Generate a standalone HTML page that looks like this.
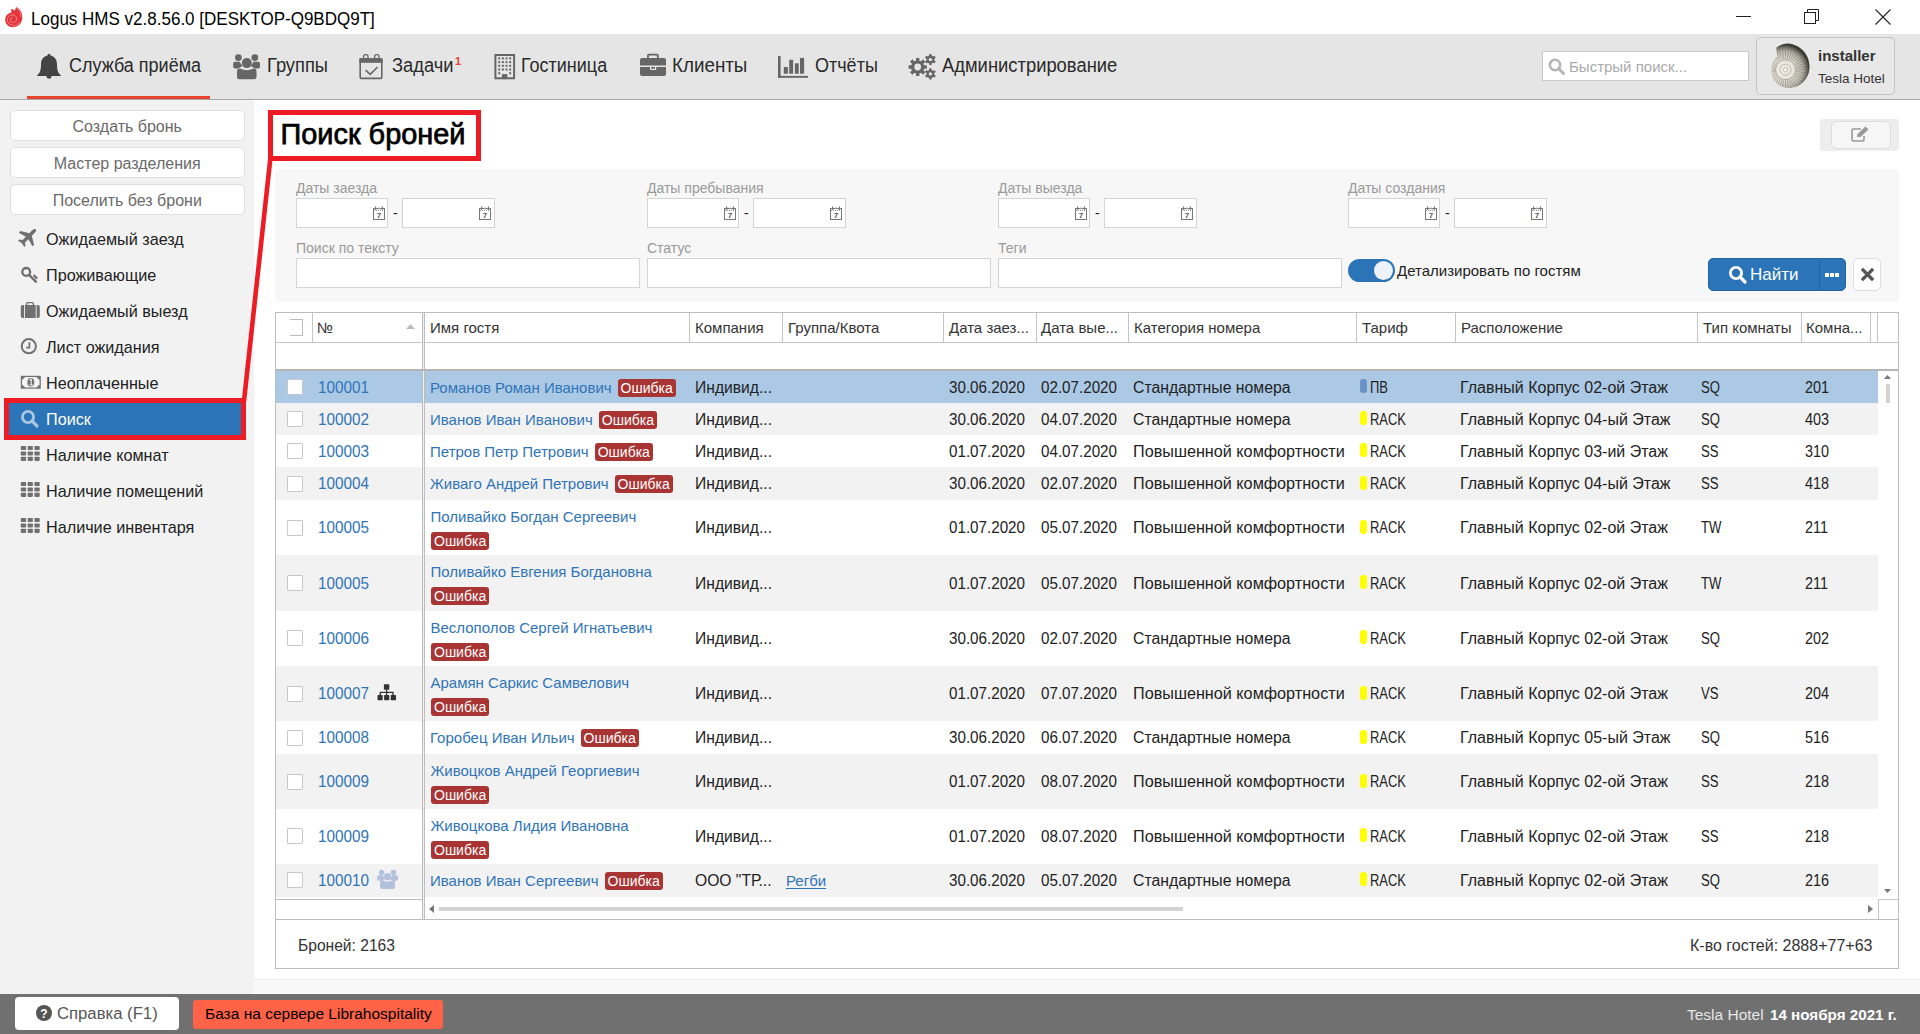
<!DOCTYPE html>
<html><head><meta charset="utf-8"><title>Logus HMS</title><style>
*{box-sizing:border-box;margin:0;padding:0}
html,body{width:1920px;height:1034px;overflow:hidden;background:#fff;font-family:"Liberation Sans",sans-serif;color:#222}
.a{position:absolute;white-space:nowrap}
.t{position:absolute;white-space:nowrap;line-height:1}
svg{position:absolute;overflow:visible}
/* title bar */
#titlebar{position:absolute;left:0;top:0;width:1920px;height:34px;background:#fff}
#menubar{position:absolute;left:0;top:34px;width:1920px;height:66px;background:#e5e5e5;border-bottom:1px solid #a8a8a8}
.mi{position:absolute;top:34px;height:62px;line-height:62px;font-size:20px;color:#2a2a2a;transform:scaleX(0.9);transform-origin:0 0}
#sidebar{position:absolute;left:0;top:100px;width:254px;height:894px;background:#f2f2f2}
.sbtn{position:absolute;left:10px;width:234.5px;height:31px;background:#fff;border:1px solid #dedede;border-radius:5px;text-align:center;line-height:31px;font-size:16px;color:#6a6a6a}
.nav{position:absolute;left:46px;height:36px;line-height:36px;font-size:16.2px;color:#222}
#main{position:absolute;left:254px;top:100px;width:1666px;height:894px;background:#fff}
#lowband{position:absolute;left:254px;top:979px;width:1666px;height:14px;background:#f8f8f8;border-top:1px solid #ededed}
#filter{position:absolute;left:275px;top:169px;width:1624px;height:133px;background:#f7f7f7;border-radius:4px}
.flab{position:absolute;font-size:14px;color:#9a9a9a;line-height:14px}
.inp{position:absolute;height:30px;background:#fff;border:1px solid #d4d4d4}
.cal{position:absolute}
#footer{position:absolute;left:0;top:994px;width:1920px;height:40px;background:#707070}
/* table */
#tbl{position:absolute;left:275px;top:312px;width:1624px;height:657px;border:1px solid #bdbdbd;background:#fff}
.vl{position:absolute;width:1px;background:#c6c6c6}
.hl{position:absolute;height:1px;background:#c6c6c6}
.th{position:absolute;top:313px;height:29px;line-height:29px;font-size:15px;color:#333}
.row{position:absolute;left:276px;width:1602px}
.cell{position:absolute;white-space:nowrap;font-size:16px;color:#222}
.lnk{color:#2f74b8}
.badge{display:inline-block;background:#a93434;color:#fff;border-radius:3px;font-size:14px;height:18px;line-height:19px;padding:0 3px;vertical-align:top;overflow:hidden}
.cb{position:absolute;left:287px;width:16px;height:16px;background:#fff;border:1px solid #c8c8c8;border-radius:1px}
.mark{position:absolute;width:7px;height:14px;border-radius:3px}
</style></head><body>
<div id="titlebar"></div>
<svg style="left:4px;top:6px" width="20" height="23" viewBox="4 6 20 23">
<path d="M11 8.8 L15 10.5 L16 7 C20 8.5 22.3 12.5 22.3 17 C22.3 23 18.2 27.3 13 27.3 C8.5 27.3 5.2 24 5.2 19.8 C5.2 16 8 13 11.6 12.6 Z" fill="#e3353b"/>
<path d="M13 25 C9.6 25 7.4 22.6 7.4 19.8 C7.4 17 9.6 14.8 12.4 14.8 C14.8 14.8 16.7 16.6 16.7 19 C16.7 21 15.2 22.6 13.2 22.6 C11.6 22.6 10.4 21.4 10.4 19.9 C10.4 18.6 11.4 17.6 12.6 17.6" fill="none" stroke="#f08a8e" stroke-width="0.9"/>
<path d="M16 7.5 C19.5 9.5 21 13 21 17 M19.5 21.5 C18.5 24 16 25.8 13 26" fill="none" stroke="#f3a0a3" stroke-width="0.7"/>
</svg>
<div class="t" style="left:31px;top:9.5px;font-size:18px;line-height:18px;color:#000;transform:scaleX(0.945);transform-origin:0 0">Logus HMS v2.8.56.0 [DESKTOP-Q9BDQ9T]</div>
<div class="a" style="left:1736px;top:16px;width:15px;height:1px;background:#222"></div>
<svg style="left:1804px;top:9px" width="16" height="16" viewBox="0 0 16 16"><rect x="0.5" y="3.5" width="11" height="11" fill="none" stroke="#222" stroke-width="1"/><path d="M3.5 3.5 V0.5 H14.5 V11.5 H11.5" fill="none" stroke="#222" stroke-width="1"/></svg>
<svg style="left:1875px;top:9px" width="16" height="16" viewBox="0 0 16 16"><path d="M0.5 0.5 L15.5 15.5 M15.5 0.5 L0.5 15.5" stroke="#222" stroke-width="1.1"/></svg>
<div id="menubar"></div>
<div class="a" style="left:27px;top:96px;width:183px;height:3px;background:#e8432e"></div>
<div class="mi" style="left:69px;transform:scaleX(0.9)">Служба приёма</div>
<div class="mi" style="left:267px;transform:scaleX(0.915)">Группы</div>
<div class="mi" style="left:392px;transform:scaleX(0.915)">Задачи</div>
<div class="mi" style="left:521px;transform:scaleX(0.9)">Гостиница</div>
<div class="mi" style="left:672px;transform:scaleX(0.94)">Клиенты</div>
<div class="mi" style="left:815px;transform:scaleX(0.9)">Отчёты</div>
<div class="mi" style="left:942px;transform:scaleX(0.919)">Администрирование</div>
<div class="t" style="left:455px;top:56px;font-size:11px;font-weight:700;color:#e8432e">1</div>
<svg style="left:36px;top:53px" width="26" height="28" viewBox="36 53 26 28"><path d="M49 53.8 C49.9 53.8 50.4 54.5 50.5 55.6 C55 56.6 57 60 57 64.5 C57 70 57.8 72.5 61 75.5 L61 76 H37 L37 75.5 C40.2 72.5 41 70 41 64.5 C41 60 43 56.6 47.5 55.6 C47.6 54.5 48.1 53.8 49 53.8 Z" fill="#444"/><path d="M46.5 76 A2.5 2.6 0 0 0 51.5 76 Z" fill="#444"/></svg>
<svg style="left:232px;top:53px" width="30" height="28" viewBox="232 53 30 28"><circle cx="238.4" cy="57.6" r="3.4" fill="#666"/><circle cx="254.8" cy="57.6" r="3.4" fill="#666"/><path d="M233.2 63.5 Q233.2 61.7 235 61.7 L239.5 61.7 Q241 64 242.5 66 Q240 67 238.5 68.5 L235 68.5 Q233.2 68.5 233.2 66.8 Z" fill="#666"/><path d="M260 63.5 Q260 61.7 258.2 61.7 L253.7 61.7 Q252.2 64 250.7 66 Q253.2 67 254.7 68.5 L258.2 68.5 Q260 68.5 260 66.8 Z" fill="#666"/><circle cx="246.8" cy="63.1" r="5" fill="#666"/><path d="M237 71.5 Q237 68.4 240 68.4 Q243.5 70.2 246.8 70.2 Q250.1 70.2 253.5 68.4 Q256.5 68.4 256.5 71.5 L256.5 76.8 Q256.5 79.3 254 79.3 L239.5 79.3 Q237 79.3 237 76.8 Z" fill="#666"/></svg>
<svg style="left:358px;top:53px" width="26" height="28" viewBox="358 53 26 28"><rect x="360.2" y="59" width="21.6" height="19.4" rx="1" fill="none" stroke="#666" stroke-width="1.6"/><rect x="359.4" y="58.3" width="23.2" height="4.5" fill="#666"/><rect x="363.6" y="54.6" width="4.4" height="6.4" rx="2" fill="none" stroke="#666" stroke-width="1.3"/><rect x="374.6" y="54.6" width="4.4" height="6.4" rx="2" fill="none" stroke="#666" stroke-width="1.3"/><path d="M365.6 70.2 L370.2 74.3 L377.6 67" fill="none" stroke="#666" stroke-width="1.6"/></svg>
<svg style="left:493px;top:53px" width="24" height="28" viewBox="493 53 24 28"><rect x="495.4" y="55" width="18.7" height="23.3" fill="none" stroke="#666" stroke-width="2"/><rect x="498.20" y="57.40" width="2" height="2" fill="#666"/><rect x="501.85" y="57.40" width="2" height="2" fill="#666"/><rect x="505.50" y="57.40" width="2" height="2" fill="#666"/><rect x="509.15" y="57.40" width="2" height="2" fill="#666"/><rect x="498.20" y="61.10" width="2" height="2" fill="#666"/><rect x="501.85" y="61.10" width="2" height="2" fill="#666"/><rect x="505.50" y="61.10" width="2" height="2" fill="#666"/><rect x="509.15" y="61.10" width="2" height="2" fill="#666"/><rect x="498.20" y="64.80" width="2" height="2" fill="#666"/><rect x="501.85" y="64.80" width="2" height="2" fill="#666"/><rect x="505.50" y="64.80" width="2" height="2" fill="#666"/><rect x="509.15" y="64.80" width="2" height="2" fill="#666"/><rect x="498.20" y="68.50" width="2" height="2" fill="#666"/><rect x="501.85" y="68.50" width="2" height="2" fill="#666"/><rect x="505.50" y="68.50" width="2" height="2" fill="#666"/><rect x="509.15" y="68.50" width="2" height="2" fill="#666"/><rect x="498.2" y="72.2" width="2" height="2" fill="#666"/><rect x="509.1" y="72.2" width="2" height="2" fill="#666"/><rect x="501.9" y="74.1" width="5.4" height="5" fill="#666"/></svg>
<svg style="left:638px;top:52px" width="30" height="26" viewBox="638 52 30 26"><path d="M647.1 58.5 V55.3 Q647.1 53.8 648.6 53.8 H657.2 Q658.7 53.8 658.7 55.3 V58.5 H656.9 V55.6 H648.9 V58.5 Z" fill="#666"/><path d="M640 60 Q640 58 642 58 H664 Q666 58 666 60 V65.6 H640 Z" fill="#666"/><path d="M640 67 H650 V70 H656.2 V67 H666 V74 Q666 76 664 76 H642 Q640 76 640 74 Z" fill="#666"/><rect x="651.3" y="67" width="3.6" height="1.8" fill="#666"/></svg>
<svg style="left:776px;top:53px" width="34" height="27" viewBox="776 53 34 27"><rect x="778" y="55.9" width="2.6" height="21.9" fill="#666"/><rect x="778" y="75.9" width="30" height="1.9" fill="#666"/><rect x="783.8" y="67" width="4.1" height="6.7" fill="#666"/><rect x="789.2" y="59.8" width="3.9" height="13.9" fill="#666"/><rect x="794.9" y="63.3" width="3.8" height="10.4" fill="#666"/><rect x="800" y="57.9" width="4.1" height="15.8" fill="#666"/></svg>
<svg style="left:905px;top:52px" width="36" height="30" viewBox="905 52 36 30"><rect x="916.20" y="58.00" width="3.0" height="18.00" fill="#666" transform="rotate(0.0 917.7 67)"/><rect x="916.20" y="58.00" width="3.0" height="18.00" fill="#666" transform="rotate(45.0 917.7 67)"/><rect x="916.20" y="58.00" width="3.0" height="18.00" fill="#666" transform="rotate(90.0 917.7 67)"/><rect x="916.20" y="58.00" width="3.0" height="18.00" fill="#666" transform="rotate(135.0 917.7 67)"/><rect x="916.20" y="58.00" width="3.0" height="18.00" fill="#666" transform="rotate(180.0 917.7 67)"/><rect x="916.20" y="58.00" width="3.0" height="18.00" fill="#666" transform="rotate(225.0 917.7 67)"/><rect x="916.20" y="58.00" width="3.0" height="18.00" fill="#666" transform="rotate(270.0 917.7 67)"/><rect x="916.20" y="58.00" width="3.0" height="18.00" fill="#666" transform="rotate(315.0 917.7 67)"/><circle cx="917.7" cy="67" r="6.6" fill="#666"/><circle cx="917.7" cy="67" r="3.4" fill="#e5e5e5"/><rect x="929.40" y="54.20" width="2.0" height="10.80" fill="#666" transform="rotate(0.0 930.4 59.6)"/><rect x="929.40" y="54.20" width="2.0" height="10.80" fill="#666" transform="rotate(60.0 930.4 59.6)"/><rect x="929.40" y="54.20" width="2.0" height="10.80" fill="#666" transform="rotate(120.0 930.4 59.6)"/><rect x="929.40" y="54.20" width="2.0" height="10.80" fill="#666" transform="rotate(180.0 930.4 59.6)"/><rect x="929.40" y="54.20" width="2.0" height="10.80" fill="#666" transform="rotate(240.0 930.4 59.6)"/><rect x="929.40" y="54.20" width="2.0" height="10.80" fill="#666" transform="rotate(300.0 930.4 59.6)"/><circle cx="930.4" cy="59.6" r="4.0" fill="#666"/><circle cx="930.4" cy="59.6" r="1.7" fill="#e5e5e5"/><rect x="929.40" y="68.50" width="2.0" height="10.80" fill="#666" transform="rotate(0.0 930.4 73.9)"/><rect x="929.40" y="68.50" width="2.0" height="10.80" fill="#666" transform="rotate(60.0 930.4 73.9)"/><rect x="929.40" y="68.50" width="2.0" height="10.80" fill="#666" transform="rotate(120.0 930.4 73.9)"/><rect x="929.40" y="68.50" width="2.0" height="10.80" fill="#666" transform="rotate(180.0 930.4 73.9)"/><rect x="929.40" y="68.50" width="2.0" height="10.80" fill="#666" transform="rotate(240.0 930.4 73.9)"/><rect x="929.40" y="68.50" width="2.0" height="10.80" fill="#666" transform="rotate(300.0 930.4 73.9)"/><circle cx="930.4" cy="73.9" r="4.0" fill="#666"/><circle cx="930.4" cy="73.9" r="1.7" fill="#e5e5e5"/></svg>
<div class="a" style="left:1542px;top:51px;width:207px;height:30px;background:#fff;border:1px solid #c9c9c9"></div>
<svg style="left:1548px;top:58px" width="17" height="17" viewBox="0 0 17 17"><circle cx="7" cy="7" r="5.2" fill="none" stroke="#b5b5b5" stroke-width="2.6"/><path d="M10.5 10.5 L15.5 15.5" stroke="#b5b5b5" stroke-width="3" stroke-linecap="round"/></svg>
<div class="t" style="left:1569px;top:58px;font-size:15px;line-height:17px;color:#aaa">Быстрый поиск...</div>
<div class="a" style="left:1756px;top:37px;width:139px;height:58px;background:#e8e8e8;border:1px solid #c4c4c4;border-radius:5px"></div>
<svg style="left:1768px;top:40px" width="46" height="50" viewBox="1768 40 46 50">
<defs><radialGradient id="sh" cx="1784" cy="70" r="25" gradientUnits="userSpaceOnUse"><stop offset="0" stop-color="#f2efe8"/><stop offset="0.45" stop-color="#e6e2d8"/><stop offset="0.75" stop-color="#b8b4a9"/><stop offset="0.92" stop-color="#6e6a62"/><stop offset="1" stop-color="#3a3833"/></radialGradient>
<clipPath id="shc"><path d="M1788 43.5 C1800 44.5 1809.5 54 1809.5 66.5 C1809.5 79 1800 88 1789 88 C1778.5 88 1771.5 80 1771.5 70.5 C1771.5 63.5 1774.5 58.5 1777.5 56.5 C1776.5 53 1776.3 50 1776.5 47.5 C1780 45 1784 43.5 1788 43.5 Z"/></clipPath></defs>
<path d="M1788 43.5 C1800 44.5 1809.5 54 1809.5 66.5 C1809.5 79 1800 88 1789 88 C1778.5 88 1771.5 80 1771.5 70.5 C1771.5 63.5 1774.5 58.5 1777.5 56.5 C1776.5 53 1776.3 50 1776.5 47.5 C1780 45 1784 43.5 1788 43.5 Z" fill="url(#sh)"/>
<g clip-path="url(#shc)"><path d="M1796.0 69.7 L1815.5 69.7 M1795.9 71.3 L1815.1 74.4 M1795.5 72.9 L1814.0 79.0 M1794.9 74.5 L1812.2 83.3 M1794.0 75.9 L1809.8 87.3 M1792.9 77.1 L1806.7 90.9 M1791.7 78.2 L1803.1 94.0 M1790.3 79.1 L1799.1 96.4 M1788.7 79.7 L1794.8 98.2 M1787.1 80.1 L1790.2 99.3 M1785.5 80.2 L1785.5 99.7 M1783.9 80.1 L1780.8 99.3 M1782.3 79.7 L1776.2 98.2 M1780.7 79.1 L1771.9 96.4 M1779.3 78.2 L1767.9 94.0 M1778.1 77.1 L1764.3 90.9 M1777.0 75.9 L1761.2 87.3 M1776.1 74.5 L1758.8 83.3 M1775.5 72.9 L1757.0 79.0 M1775.1 71.3 L1755.9 74.4 M1775.0 69.7 L1755.5 69.7 M1775.1 68.1 L1755.9 65.0 M1775.5 66.5 L1757.0 60.4 M1776.1 64.9 L1758.8 56.1 M1777.0 63.5 L1761.2 52.1 M1778.1 62.3 L1764.3 48.5 M1779.3 61.2 L1767.9 45.4 M1780.7 60.3 L1771.9 43.0 M1782.3 59.7 L1776.2 41.2 M1783.9 59.3 L1780.8 40.1 M1785.5 59.2 L1785.5 39.7 M1787.1 59.3 L1790.2 40.1 M1788.7 59.7 L1794.8 41.2 M1790.3 60.3 L1799.1 43.0 M1791.7 61.2 L1803.1 45.4 M1792.9 62.3 L1806.7 48.5 M1794.0 63.5 L1809.8 52.1 M1794.9 64.9 L1812.2 56.1 M1795.5 66.5 L1814.0 60.4 M1795.9 68.1 L1815.1 65.0 " stroke="#6a665e" stroke-width="1" opacity="0.45"/></g>
<circle cx="1785.5" cy="69.7" r="10" fill="none" stroke="#a9a59a" stroke-width="1"/>
<circle cx="1785.5" cy="69.7" r="5.5" fill="none" stroke="#b4b0a5" stroke-width="0.9"/>
<circle cx="1785.5" cy="69.7" r="2.3" fill="none" stroke="#b4b0a5" stroke-width="0.7"/>
</svg>
<div class="t" style="left:1818px;top:47px;font-size:15px;line-height:17px;font-weight:700;color:#333">installer</div>
<div class="t" style="left:1818px;top:71px;font-size:13.5px;line-height:16px;color:#333">Tesla Hotel</div>
<div id="sidebar"></div>
<div class="sbtn" style="top:109.5px">Создать бронь</div>
<div class="sbtn" style="top:146.5px">Мастер разделения</div>
<div class="sbtn" style="top:183.5px">Поселить без брони</div>
<div class="nav" style="top:221px">Ожидаемый заезд</div>
<svg style="left:18px;top:226px" width="22" height="22" viewBox="18 226 22 22"><path d="M0,-10 C1.2,-10 1.7,-8.5 1.7,-7 L1.7,-3 L9.2,1.4 L9.2,3.6 L1.7,1.6 L1.7,6 L4.2,8 L4.2,9.6 L0,8.6 L-4.2,9.6 L-4.2,8 L-1.7,6 L-1.7,1.6 L-9.2,3.6 L-9.2,1.4 L-1.7,-3 L-1.7,-7 C-1.7,-8.5 -1.2,-10 0,-10 Z" fill="#707070" transform="translate(28.3 236.8) rotate(45) scale(1.05)"/></svg>
<div class="nav" style="top:257px">Проживающие</div>
<svg style="left:18px;top:263px" width="22" height="22" viewBox="18 263 22 22"><circle cx="26.2" cy="271.9" r="3.9" fill="none" stroke="#707070" stroke-width="2.3"/><path d="M28.8 274.6 L36.6 282.4" stroke="#707070" stroke-width="2.5"/><path d="M33.6 275 L37.2 278.6" stroke="#707070" stroke-width="2.2"/></svg>
<div class="nav" style="top:293px">Ожидаемый выезд</div>
<svg style="left:18px;top:300px" width="24" height="20" viewBox="18 300 24 20"><rect x="26.6" y="302.6" width="6.8" height="3.6" rx="1" fill="none" stroke="#707070" stroke-width="1.3"/><rect x="20.8" y="305" width="19" height="13" rx="2" fill="#707070"/><rect x="24" y="305" width="0.9" height="13" fill="#f2f2f2"/><rect x="35.7" y="305" width="0.9" height="13" fill="#f2f2f2"/></svg>
<div class="nav" style="top:329px">Лист ожидания</div>
<svg style="left:18px;top:336px" width="22" height="22" viewBox="18 336 22 22"><circle cx="28.8" cy="346.2" r="7.1" fill="none" stroke="#707070" stroke-width="2"/><path d="M29.4 342.3 V347.6 H26.2" fill="none" stroke="#707070" stroke-width="1.7"/></svg>
<div class="nav" style="top:365px">Неоплаченные</div>
<svg style="left:18px;top:373px" width="26" height="18" viewBox="18 373 26 18"><rect x="20.8" y="375.8" width="20" height="12.9" fill="#707070"/><path d="M25.2 377 H36.4 L39.6 380 V384.6 L36.4 387.6 H25.2 L22 384.6 V380 Z" fill="#f2f2f2"/><ellipse cx="30.8" cy="382.2" rx="3.4" ry="4.3" fill="#707070"/><path d="M29.6 380.2 L31.2 379.2 V384.6 M29.4 385 H33" fill="none" stroke="#f2f2f2" stroke-width="1.1"/></svg>
<div class="a" style="left:9px;top:403px;width:232px;height:32px;background:#2b74b8"></div>
<div class="nav" style="top:401px;color:#fff">Поиск</div>
<svg style="left:20px;top:409px" width="19" height="19" viewBox="0 0 19 19"><circle cx="8" cy="8" r="5.6" fill="none" stroke="#a9c6e3" stroke-width="2.8"/><path d="M12 12 L17 17" stroke="#a9c6e3" stroke-width="3.2" stroke-linecap="round"/></svg>
<div class="nav" style="top:437px">Наличие комнат</div>
<svg style="left:19px;top:444px" width="24" height="19" viewBox="19 444 24 19"><rect x="20.8" y="446.0" width="5.3" height="4.1" rx="0.8" fill="#707070"/><rect x="27.6" y="446.0" width="5.3" height="4.1" rx="0.8" fill="#707070"/><rect x="34.4" y="446.0" width="5.3" height="4.1" rx="0.8" fill="#707070"/><rect x="20.8" y="451.4" width="5.3" height="4.1" rx="0.8" fill="#707070"/><rect x="27.6" y="451.4" width="5.3" height="4.1" rx="0.8" fill="#707070"/><rect x="34.4" y="451.4" width="5.3" height="4.1" rx="0.8" fill="#707070"/><rect x="20.8" y="456.8" width="5.3" height="4.1" rx="0.8" fill="#707070"/><rect x="27.6" y="456.8" width="5.3" height="4.1" rx="0.8" fill="#707070"/><rect x="34.4" y="456.8" width="5.3" height="4.1" rx="0.8" fill="#707070"/></svg>
<div class="nav" style="top:473px">Наличие помещений</div>
<svg style="left:19px;top:480px" width="24" height="19" viewBox="19 480 24 19"><rect x="20.8" y="482.0" width="5.3" height="4.1" rx="0.8" fill="#707070"/><rect x="27.6" y="482.0" width="5.3" height="4.1" rx="0.8" fill="#707070"/><rect x="34.4" y="482.0" width="5.3" height="4.1" rx="0.8" fill="#707070"/><rect x="20.8" y="487.4" width="5.3" height="4.1" rx="0.8" fill="#707070"/><rect x="27.6" y="487.4" width="5.3" height="4.1" rx="0.8" fill="#707070"/><rect x="34.4" y="487.4" width="5.3" height="4.1" rx="0.8" fill="#707070"/><rect x="20.8" y="492.8" width="5.3" height="4.1" rx="0.8" fill="#707070"/><rect x="27.6" y="492.8" width="5.3" height="4.1" rx="0.8" fill="#707070"/><rect x="34.4" y="492.8" width="5.3" height="4.1" rx="0.8" fill="#707070"/></svg>
<div class="nav" style="top:509px">Наличие инвентаря</div>
<svg style="left:19px;top:516px" width="24" height="19" viewBox="19 516 24 19"><rect x="20.8" y="518.0" width="5.3" height="4.1" rx="0.8" fill="#707070"/><rect x="27.6" y="518.0" width="5.3" height="4.1" rx="0.8" fill="#707070"/><rect x="34.4" y="518.0" width="5.3" height="4.1" rx="0.8" fill="#707070"/><rect x="20.8" y="523.4" width="5.3" height="4.1" rx="0.8" fill="#707070"/><rect x="27.6" y="523.4" width="5.3" height="4.1" rx="0.8" fill="#707070"/><rect x="34.4" y="523.4" width="5.3" height="4.1" rx="0.8" fill="#707070"/><rect x="20.8" y="528.8" width="5.3" height="4.1" rx="0.8" fill="#707070"/><rect x="27.6" y="528.8" width="5.3" height="4.1" rx="0.8" fill="#707070"/><rect x="34.4" y="528.8" width="5.3" height="4.1" rx="0.8" fill="#707070"/></svg>
<div id="main"></div>
<div id="lowband"></div>
<div class="t" style="left:280.5px;top:119px;font-size:28.9px;line-height:30px;color:#000;-webkit-text-stroke:0.75px #000">Поиск броней</div>
<div class="a" style="left:1820px;top:119px;width:79px;height:32px;background:#ededed;border-radius:3px"></div>
<div class="a" style="left:1831px;top:121px;width:60px;height:28px;background:#f6f6f6;border:1px solid #dcdcdc;border-radius:5px"></div>
<svg style="left:1851px;top:126px" width="19" height="16" viewBox="0 0 19 16"><path d="M10 3 H2.5 C1.7 3 1 3.7 1 4.5 V13.5 C1 14.3 1.7 15 2.5 15 H11.5 C12.3 15 13 14.3 13 13.5 V10" fill="none" stroke="#999" stroke-width="1.6"/><path d="M6 11 L6.5 8 L14.5 0.5 L17.5 3.5 L9.5 11 Z" fill="#999"/></svg>
<div id="filter"></div>
<div class="flab" style="left:296px;top:180.5px">Даты заезда</div>
<div class="inp" style="left:296px;top:198px;width:92px"></div>
<svg style="left:373px;top:206px" width="12" height="14" viewBox="0 0 12 14"><rect x="0.5" y="2.5" width="11" height="11" fill="none" stroke="#777" stroke-width="1"/><path d="M1 4.5 H11" stroke="#999" stroke-width="1" stroke-dasharray="1 1"/><rect x="2" y="0.5" width="1.2" height="3.5" fill="#777"/><rect x="8.8" y="0.5" width="1.2" height="3.5" fill="#777"/><rect x="5.2" y="1.5" width="1.6" height="2" fill="#aaa"/><text x="6" y="12.4" font-size="8" font-family="Liberation Sans" font-weight="700" text-anchor="middle" fill="#555">7</text></svg>
<div class="t" style="left:393px;top:206px;font-size:14px;color:#222">-</div>
<div class="inp" style="left:402px;top:198px;width:93px"></div>
<svg style="left:479px;top:206px" width="12" height="14" viewBox="0 0 12 14"><rect x="0.5" y="2.5" width="11" height="11" fill="none" stroke="#777" stroke-width="1"/><path d="M1 4.5 H11" stroke="#999" stroke-width="1" stroke-dasharray="1 1"/><rect x="2" y="0.5" width="1.2" height="3.5" fill="#777"/><rect x="8.8" y="0.5" width="1.2" height="3.5" fill="#777"/><rect x="5.2" y="1.5" width="1.6" height="2" fill="#aaa"/><text x="6" y="12.4" font-size="8" font-family="Liberation Sans" font-weight="700" text-anchor="middle" fill="#555">7</text></svg>
<div class="flab" style="left:647px;top:180.5px">Даты пребывания</div>
<div class="inp" style="left:647px;top:198px;width:92px"></div>
<svg style="left:724px;top:206px" width="12" height="14" viewBox="0 0 12 14"><rect x="0.5" y="2.5" width="11" height="11" fill="none" stroke="#777" stroke-width="1"/><path d="M1 4.5 H11" stroke="#999" stroke-width="1" stroke-dasharray="1 1"/><rect x="2" y="0.5" width="1.2" height="3.5" fill="#777"/><rect x="8.8" y="0.5" width="1.2" height="3.5" fill="#777"/><rect x="5.2" y="1.5" width="1.6" height="2" fill="#aaa"/><text x="6" y="12.4" font-size="8" font-family="Liberation Sans" font-weight="700" text-anchor="middle" fill="#555">7</text></svg>
<div class="t" style="left:744px;top:206px;font-size:14px;color:#222">-</div>
<div class="inp" style="left:753px;top:198px;width:93px"></div>
<svg style="left:830px;top:206px" width="12" height="14" viewBox="0 0 12 14"><rect x="0.5" y="2.5" width="11" height="11" fill="none" stroke="#777" stroke-width="1"/><path d="M1 4.5 H11" stroke="#999" stroke-width="1" stroke-dasharray="1 1"/><rect x="2" y="0.5" width="1.2" height="3.5" fill="#777"/><rect x="8.8" y="0.5" width="1.2" height="3.5" fill="#777"/><rect x="5.2" y="1.5" width="1.6" height="2" fill="#aaa"/><text x="6" y="12.4" font-size="8" font-family="Liberation Sans" font-weight="700" text-anchor="middle" fill="#555">7</text></svg>
<div class="flab" style="left:998px;top:180.5px">Даты выезда</div>
<div class="inp" style="left:998px;top:198px;width:92px"></div>
<svg style="left:1075px;top:206px" width="12" height="14" viewBox="0 0 12 14"><rect x="0.5" y="2.5" width="11" height="11" fill="none" stroke="#777" stroke-width="1"/><path d="M1 4.5 H11" stroke="#999" stroke-width="1" stroke-dasharray="1 1"/><rect x="2" y="0.5" width="1.2" height="3.5" fill="#777"/><rect x="8.8" y="0.5" width="1.2" height="3.5" fill="#777"/><rect x="5.2" y="1.5" width="1.6" height="2" fill="#aaa"/><text x="6" y="12.4" font-size="8" font-family="Liberation Sans" font-weight="700" text-anchor="middle" fill="#555">7</text></svg>
<div class="t" style="left:1095px;top:206px;font-size:14px;color:#222">-</div>
<div class="inp" style="left:1104px;top:198px;width:93px"></div>
<svg style="left:1181px;top:206px" width="12" height="14" viewBox="0 0 12 14"><rect x="0.5" y="2.5" width="11" height="11" fill="none" stroke="#777" stroke-width="1"/><path d="M1 4.5 H11" stroke="#999" stroke-width="1" stroke-dasharray="1 1"/><rect x="2" y="0.5" width="1.2" height="3.5" fill="#777"/><rect x="8.8" y="0.5" width="1.2" height="3.5" fill="#777"/><rect x="5.2" y="1.5" width="1.6" height="2" fill="#aaa"/><text x="6" y="12.4" font-size="8" font-family="Liberation Sans" font-weight="700" text-anchor="middle" fill="#555">7</text></svg>
<div class="flab" style="left:1348px;top:180.5px">Даты создания</div>
<div class="inp" style="left:1348px;top:198px;width:92px"></div>
<svg style="left:1425px;top:206px" width="12" height="14" viewBox="0 0 12 14"><rect x="0.5" y="2.5" width="11" height="11" fill="none" stroke="#777" stroke-width="1"/><path d="M1 4.5 H11" stroke="#999" stroke-width="1" stroke-dasharray="1 1"/><rect x="2" y="0.5" width="1.2" height="3.5" fill="#777"/><rect x="8.8" y="0.5" width="1.2" height="3.5" fill="#777"/><rect x="5.2" y="1.5" width="1.6" height="2" fill="#aaa"/><text x="6" y="12.4" font-size="8" font-family="Liberation Sans" font-weight="700" text-anchor="middle" fill="#555">7</text></svg>
<div class="t" style="left:1445px;top:206px;font-size:14px;color:#222">-</div>
<div class="inp" style="left:1454px;top:198px;width:93px"></div>
<svg style="left:1531px;top:206px" width="12" height="14" viewBox="0 0 12 14"><rect x="0.5" y="2.5" width="11" height="11" fill="none" stroke="#777" stroke-width="1"/><path d="M1 4.5 H11" stroke="#999" stroke-width="1" stroke-dasharray="1 1"/><rect x="2" y="0.5" width="1.2" height="3.5" fill="#777"/><rect x="8.8" y="0.5" width="1.2" height="3.5" fill="#777"/><rect x="5.2" y="1.5" width="1.6" height="2" fill="#aaa"/><text x="6" y="12.4" font-size="8" font-family="Liberation Sans" font-weight="700" text-anchor="middle" fill="#555">7</text></svg>
<div class="flab" style="left:296px;top:240.5px">Поиск по тексту</div>
<div class="inp" style="left:296px;top:258px;width:344px"></div>
<div class="flab" style="left:647px;top:240.5px">Статус</div>
<div class="inp" style="left:647px;top:258px;width:344px"></div>
<div class="flab" style="left:998px;top:240.5px">Теги</div>
<div class="inp" style="left:998px;top:258px;width:344px"></div>
<div class="a" style="left:1348px;top:259px;width:47px;height:23px;background:#2b74b8;border-radius:12px"></div>
<div class="a" style="left:1374px;top:261px;width:19px;height:19px;background:#eef3f9;border-radius:50%"></div>
<div class="t" style="left:1397px;top:263px;font-size:15px;line-height:16px;color:#222">Детализировать по гостям</div>
<div class="a" style="left:1708px;top:258px;width:112px;height:33px;background:#2b74b8;border:1px solid #23649f;border-radius:5px 0 0 5px"></div>
<svg style="left:1728px;top:265px" width="19" height="19" viewBox="0 0 19 19"><circle cx="8" cy="8" r="5.6" fill="none" stroke="#fff" stroke-width="2.8"/><path d="M12 12 L17 17" stroke="#fff" stroke-width="3.2" stroke-linecap="round"/></svg>
<div class="t" style="left:1750px;top:266px;font-size:17px;line-height:18px;color:#fff">Найти</div>
<div class="a" style="left:1819px;top:258px;width:27px;height:33px;background:#2b74b8;border:1px solid #23649f;border-radius:0 5px 5px 0"></div>
<div class="a" style="left:1825px;top:273px;width:14px;height:4px;background:repeating-linear-gradient(90deg,#fff 0 4px,transparent 4px 5px)"></div>
<div class="a" style="left:1853px;top:258px;width:28px;height:33px;background:#fff;border:1px solid #dcdcdc;border-radius:5px"></div>
<svg style="left:1861px;top:268px" width="13" height="13" viewBox="0 0 13 13"><path d="M2 2 L11 11 M11 2 L2 11" stroke="#555" stroke-width="3.2" stroke-linecap="square"/></svg>
<div id="tbl"></div>
<div class="hl" style="left:276px;top:342px;width:1622px"></div>
<div class="vl" style="left:312px;top:313px;height:29px"></div>
<div class="vl" style="left:689px;top:313px;height:29px"></div>
<div class="vl" style="left:782px;top:313px;height:29px"></div>
<div class="vl" style="left:943px;top:313px;height:29px"></div>
<div class="vl" style="left:1036px;top:313px;height:29px"></div>
<div class="vl" style="left:1128px;top:313px;height:29px"></div>
<div class="vl" style="left:1356px;top:313px;height:29px"></div>
<div class="vl" style="left:1455px;top:313px;height:29px"></div>
<div class="vl" style="left:1697px;top:313px;height:29px"></div>
<div class="vl" style="left:1801px;top:313px;height:29px"></div>
<div class="vl" style="left:1870px;top:313px;height:29px"></div>
<div class="vl" style="left:1877px;top:313px;height:29px"></div>
<div class="a" style="left:422px;top:313px;width:3px;height:606px;border-left:1px solid #bdbdbd;border-right:1px solid #bdbdbd;background:#f0f0f0"></div>
<div class="a" style="left:276px;top:369px;width:1622px;height:2px;background:#b4b4b4"></div>
<div class="th" style="left:317px">№</div>
<div class="th" style="left:430px">Имя гостя</div>
<div class="th" style="left:695px">Компания</div>
<div class="th" style="left:788px">Группа/Квота</div>
<div class="th" style="left:949px">Дата заез...</div>
<div class="th" style="left:1041px">Дата вые...</div>
<div class="th" style="left:1134px">Категория номера</div>
<div class="th" style="left:1362px">Тариф</div>
<div class="th" style="left:1461px">Расположение</div>
<div class="th" style="left:1703px">Тип комнаты</div>
<div class="th" style="left:1806px">Комна...</div>
<div class="a" style="left:290px;top:319px;width:13px;height:17px;border:1px solid #bbb;border-left:none"></div>
<svg style="left:406px;top:324px" width="9" height="5" viewBox="0 0 9 5"><path d="M0 5 L4.5 0 L9 5 Z" fill="#bbb"/></svg>
<div class="a" style="left:276px;top:371px;width:146px;height:32px;background:#abc9e5"></div>
<div class="a" style="left:425px;top:371px;width:1453px;height:32px;background:#abc9e5"></div>
<div class="cb" style="top:379px"></div>
<div class="cell" style="left:318px;top:371.5px;height:32px;line-height:32px;font-size:16px;color:#2f74b8;transform:scaleX(0.9550);transform-origin:0 0;">100001</div>
<div class="cell" style="left:430px;top:371.5px;height:32px;line-height:32px;font-size:15px;color:#2f74b8">Романов Роман Иванович</div>
<div class="a" style="left:617.6px;top:378.5px"><span class="badge">Ошибка</span></div>
<div class="cell" style="left:695px;top:371.5px;height:32px;line-height:32px;font-size:16px;color:#222;transform:scaleX(0.9780);transform-origin:0 0;">Индивид...</div>
<div class="cell" style="left:949px;top:371.5px;height:32px;line-height:32px;font-size:16px;color:#222;transform:scaleX(0.9490);transform-origin:0 0;">30.06.2020</div>
<div class="cell" style="left:1041px;top:371.5px;height:32px;line-height:32px;font-size:16px;color:#222;transform:scaleX(0.9490);transform-origin:0 0;">02.07.2020</div>
<div class="cell" style="left:1133px;top:371.5px;height:32px;line-height:32px;font-size:16px;color:#222;transform:scaleX(0.9865);transform-origin:0 0;">Стандартные номера</div>
<div class="mark" style="left:1360px;top:379px;background:#6b93c6"></div>
<div class="cell" style="left:1370px;top:371.5px;height:32px;line-height:32px;font-size:16px;color:#222;transform:scaleX(0.8100);transform-origin:0 0;">ПВ</div>
<div class="cell" style="left:1460px;top:371.5px;height:32px;line-height:32px;font-size:16px;color:#222;">Главный Корпус 02-ой Этаж</div>
<div class="cell" style="left:1701px;top:371.5px;height:32px;line-height:32px;font-size:16px;color:#222;transform:scaleX(0.8200);transform-origin:0 0;">SQ</div>
<div class="cell" style="left:1805px;top:371.5px;height:32px;line-height:32px;font-size:16px;color:#222;transform:scaleX(0.9000);transform-origin:0 0;">201</div>
<div class="a" style="left:276px;top:403px;width:146px;height:32px;background:#f2f2f2"></div>
<div class="a" style="left:425px;top:403px;width:1453px;height:32px;background:#f2f2f2"></div>
<div class="cb" style="top:411px"></div>
<div class="cell" style="left:318px;top:403.5px;height:32px;line-height:32px;font-size:16px;color:#2f74b8;transform:scaleX(0.9550);transform-origin:0 0;">100002</div>
<div class="cell" style="left:430px;top:403.5px;height:32px;line-height:32px;font-size:15px;color:#2f74b8">Иванов Иван Иванович</div>
<div class="a" style="left:598.8px;top:410.5px"><span class="badge">Ошибка</span></div>
<div class="cell" style="left:695px;top:403.5px;height:32px;line-height:32px;font-size:16px;color:#222;transform:scaleX(0.9780);transform-origin:0 0;">Индивид...</div>
<div class="cell" style="left:949px;top:403.5px;height:32px;line-height:32px;font-size:16px;color:#222;transform:scaleX(0.9490);transform-origin:0 0;">30.06.2020</div>
<div class="cell" style="left:1041px;top:403.5px;height:32px;line-height:32px;font-size:16px;color:#222;transform:scaleX(0.9490);transform-origin:0 0;">04.07.2020</div>
<div class="cell" style="left:1133px;top:403.5px;height:32px;line-height:32px;font-size:16px;color:#222;transform:scaleX(0.9865);transform-origin:0 0;">Стандартные номера</div>
<div class="mark" style="left:1360px;top:411px;background:#ffff00"></div>
<div class="cell" style="left:1370px;top:403.5px;height:32px;line-height:32px;font-size:16px;color:#222;transform:scaleX(0.8100);transform-origin:0 0;">RACK</div>
<div class="cell" style="left:1460px;top:403.5px;height:32px;line-height:32px;font-size:16px;color:#222;">Главный Корпус 04-ый Этаж</div>
<div class="cell" style="left:1701px;top:403.5px;height:32px;line-height:32px;font-size:16px;color:#222;transform:scaleX(0.8200);transform-origin:0 0;">SQ</div>
<div class="cell" style="left:1805px;top:403.5px;height:32px;line-height:32px;font-size:16px;color:#222;transform:scaleX(0.9000);transform-origin:0 0;">403</div>
<div class="a" style="left:276px;top:435px;width:146px;height:32px;background:#ffffff"></div>
<div class="a" style="left:425px;top:435px;width:1453px;height:32px;background:#ffffff"></div>
<div class="cb" style="top:443px"></div>
<div class="cell" style="left:318px;top:435.5px;height:32px;line-height:32px;font-size:16px;color:#2f74b8;transform:scaleX(0.9550);transform-origin:0 0;">100003</div>
<div class="cell" style="left:430px;top:435.5px;height:32px;line-height:32px;font-size:15px;color:#2f74b8">Петров Петр Петрович</div>
<div class="a" style="left:594.7px;top:442.5px"><span class="badge">Ошибка</span></div>
<div class="cell" style="left:695px;top:435.5px;height:32px;line-height:32px;font-size:16px;color:#222;transform:scaleX(0.9780);transform-origin:0 0;">Индивид...</div>
<div class="cell" style="left:949px;top:435.5px;height:32px;line-height:32px;font-size:16px;color:#222;transform:scaleX(0.9490);transform-origin:0 0;">01.07.2020</div>
<div class="cell" style="left:1041px;top:435.5px;height:32px;line-height:32px;font-size:16px;color:#222;transform:scaleX(0.9490);transform-origin:0 0;">04.07.2020</div>
<div class="cell" style="left:1133px;top:435.5px;height:32px;line-height:32px;font-size:16px;color:#222;transform:scaleX(1.0124);transform-origin:0 0;">Повышенной комфортности</div>
<div class="mark" style="left:1360px;top:443px;background:#ffff00"></div>
<div class="cell" style="left:1370px;top:435.5px;height:32px;line-height:32px;font-size:16px;color:#222;transform:scaleX(0.8100);transform-origin:0 0;">RACK</div>
<div class="cell" style="left:1460px;top:435.5px;height:32px;line-height:32px;font-size:16px;color:#222;">Главный Корпус 03-ий Этаж</div>
<div class="cell" style="left:1701px;top:435.5px;height:32px;line-height:32px;font-size:16px;color:#222;transform:scaleX(0.8200);transform-origin:0 0;">SS</div>
<div class="cell" style="left:1805px;top:435.5px;height:32px;line-height:32px;font-size:16px;color:#222;transform:scaleX(0.9000);transform-origin:0 0;">310</div>
<div class="a" style="left:276px;top:467px;width:146px;height:33px;background:#f2f2f2"></div>
<div class="a" style="left:425px;top:467px;width:1453px;height:33px;background:#f2f2f2"></div>
<div class="cb" style="top:476px"></div>
<div class="cell" style="left:318px;top:468.0px;height:32px;line-height:32px;font-size:16px;color:#2f74b8;transform:scaleX(0.9550);transform-origin:0 0;">100004</div>
<div class="cell" style="left:430px;top:468.0px;height:32px;line-height:32px;font-size:15px;color:#2f74b8">Живаго Андрей Петрович</div>
<div class="a" style="left:614.6px;top:475.0px"><span class="badge">Ошибка</span></div>
<div class="cell" style="left:695px;top:468.0px;height:32px;line-height:32px;font-size:16px;color:#222;transform:scaleX(0.9780);transform-origin:0 0;">Индивид...</div>
<div class="cell" style="left:949px;top:468.0px;height:32px;line-height:32px;font-size:16px;color:#222;transform:scaleX(0.9490);transform-origin:0 0;">30.06.2020</div>
<div class="cell" style="left:1041px;top:468.0px;height:32px;line-height:32px;font-size:16px;color:#222;transform:scaleX(0.9490);transform-origin:0 0;">02.07.2020</div>
<div class="cell" style="left:1133px;top:468.0px;height:32px;line-height:32px;font-size:16px;color:#222;transform:scaleX(1.0124);transform-origin:0 0;">Повышенной комфортности</div>
<div class="mark" style="left:1360px;top:476px;background:#ffff00"></div>
<div class="cell" style="left:1370px;top:468.0px;height:32px;line-height:32px;font-size:16px;color:#222;transform:scaleX(0.8100);transform-origin:0 0;">RACK</div>
<div class="cell" style="left:1460px;top:468.0px;height:32px;line-height:32px;font-size:16px;color:#222;">Главный Корпус 04-ый Этаж</div>
<div class="cell" style="left:1701px;top:468.0px;height:32px;line-height:32px;font-size:16px;color:#222;transform:scaleX(0.8200);transform-origin:0 0;">SS</div>
<div class="cell" style="left:1805px;top:468.0px;height:32px;line-height:32px;font-size:16px;color:#222;transform:scaleX(0.9000);transform-origin:0 0;">418</div>
<div class="a" style="left:276px;top:500px;width:146px;height:55px;background:#ffffff"></div>
<div class="a" style="left:425px;top:500px;width:1453px;height:55px;background:#ffffff"></div>
<div class="cb" style="top:520px"></div>
<div class="cell" style="left:318px;top:512.0px;height:32px;line-height:32px;font-size:16px;color:#2f74b8;transform:scaleX(0.9550);transform-origin:0 0;">100005</div>
<div class="cell" style="left:430.5px;top:503.8px;height:26px;line-height:26px;font-size:15px;color:#2f74b8">Поливайко Богдан Сергеевич</div>
<div class="a" style="left:431px;top:532px"><span class="badge">Ошибка</span></div>
<div class="cell" style="left:695px;top:512.0px;height:32px;line-height:32px;font-size:16px;color:#222;transform:scaleX(0.9780);transform-origin:0 0;">Индивид...</div>
<div class="cell" style="left:949px;top:512.0px;height:32px;line-height:32px;font-size:16px;color:#222;transform:scaleX(0.9490);transform-origin:0 0;">01.07.2020</div>
<div class="cell" style="left:1041px;top:512.0px;height:32px;line-height:32px;font-size:16px;color:#222;transform:scaleX(0.9490);transform-origin:0 0;">05.07.2020</div>
<div class="cell" style="left:1133px;top:512.0px;height:32px;line-height:32px;font-size:16px;color:#222;transform:scaleX(1.0124);transform-origin:0 0;">Повышенной комфортности</div>
<div class="mark" style="left:1360px;top:520px;background:#ffff00"></div>
<div class="cell" style="left:1370px;top:512.0px;height:32px;line-height:32px;font-size:16px;color:#222;transform:scaleX(0.8100);transform-origin:0 0;">RACK</div>
<div class="cell" style="left:1460px;top:512.0px;height:32px;line-height:32px;font-size:16px;color:#222;">Главный Корпус 02-ой Этаж</div>
<div class="cell" style="left:1701px;top:512.0px;height:32px;line-height:32px;font-size:16px;color:#222;transform:scaleX(0.8200);transform-origin:0 0;">TW</div>
<div class="cell" style="left:1805px;top:512.0px;height:32px;line-height:32px;font-size:16px;color:#222;transform:scaleX(0.9000);transform-origin:0 0;">211</div>
<div class="a" style="left:276px;top:555px;width:146px;height:56px;background:#f2f2f2"></div>
<div class="a" style="left:425px;top:555px;width:1453px;height:56px;background:#f2f2f2"></div>
<div class="cb" style="top:575px"></div>
<div class="cell" style="left:318px;top:567.5px;height:32px;line-height:32px;font-size:16px;color:#2f74b8;transform:scaleX(0.9550);transform-origin:0 0;">100005</div>
<div class="cell" style="left:430.5px;top:558.8px;height:26px;line-height:26px;font-size:15px;color:#2f74b8">Поливайко Евгения Богдановна</div>
<div class="a" style="left:431px;top:587px"><span class="badge">Ошибка</span></div>
<div class="cell" style="left:695px;top:567.5px;height:32px;line-height:32px;font-size:16px;color:#222;transform:scaleX(0.9780);transform-origin:0 0;">Индивид...</div>
<div class="cell" style="left:949px;top:567.5px;height:32px;line-height:32px;font-size:16px;color:#222;transform:scaleX(0.9490);transform-origin:0 0;">01.07.2020</div>
<div class="cell" style="left:1041px;top:567.5px;height:32px;line-height:32px;font-size:16px;color:#222;transform:scaleX(0.9490);transform-origin:0 0;">05.07.2020</div>
<div class="cell" style="left:1133px;top:567.5px;height:32px;line-height:32px;font-size:16px;color:#222;transform:scaleX(1.0124);transform-origin:0 0;">Повышенной комфортности</div>
<div class="mark" style="left:1360px;top:575px;background:#ffff00"></div>
<div class="cell" style="left:1370px;top:567.5px;height:32px;line-height:32px;font-size:16px;color:#222;transform:scaleX(0.8100);transform-origin:0 0;">RACK</div>
<div class="cell" style="left:1460px;top:567.5px;height:32px;line-height:32px;font-size:16px;color:#222;">Главный Корпус 02-ой Этаж</div>
<div class="cell" style="left:1701px;top:567.5px;height:32px;line-height:32px;font-size:16px;color:#222;transform:scaleX(0.8200);transform-origin:0 0;">TW</div>
<div class="cell" style="left:1805px;top:567.5px;height:32px;line-height:32px;font-size:16px;color:#222;transform:scaleX(0.9000);transform-origin:0 0;">211</div>
<div class="a" style="left:276px;top:611px;width:146px;height:55px;background:#ffffff"></div>
<div class="a" style="left:425px;top:611px;width:1453px;height:55px;background:#ffffff"></div>
<div class="cb" style="top:630px"></div>
<div class="cell" style="left:318px;top:623.0px;height:32px;line-height:32px;font-size:16px;color:#2f74b8;transform:scaleX(0.9550);transform-origin:0 0;">100006</div>
<div class="cell" style="left:430.5px;top:614.8px;height:26px;line-height:26px;font-size:15px;color:#2f74b8">Веслополов Сергей Игнатьевич</div>
<div class="a" style="left:431px;top:643px"><span class="badge">Ошибка</span></div>
<div class="cell" style="left:695px;top:623.0px;height:32px;line-height:32px;font-size:16px;color:#222;transform:scaleX(0.9780);transform-origin:0 0;">Индивид...</div>
<div class="cell" style="left:949px;top:623.0px;height:32px;line-height:32px;font-size:16px;color:#222;transform:scaleX(0.9490);transform-origin:0 0;">30.06.2020</div>
<div class="cell" style="left:1041px;top:623.0px;height:32px;line-height:32px;font-size:16px;color:#222;transform:scaleX(0.9490);transform-origin:0 0;">02.07.2020</div>
<div class="cell" style="left:1133px;top:623.0px;height:32px;line-height:32px;font-size:16px;color:#222;transform:scaleX(0.9865);transform-origin:0 0;">Стандартные номера</div>
<div class="mark" style="left:1360px;top:630px;background:#ffff00"></div>
<div class="cell" style="left:1370px;top:623.0px;height:32px;line-height:32px;font-size:16px;color:#222;transform:scaleX(0.8100);transform-origin:0 0;">RACK</div>
<div class="cell" style="left:1460px;top:623.0px;height:32px;line-height:32px;font-size:16px;color:#222;">Главный Корпус 02-ой Этаж</div>
<div class="cell" style="left:1701px;top:623.0px;height:32px;line-height:32px;font-size:16px;color:#222;transform:scaleX(0.8200);transform-origin:0 0;">SQ</div>
<div class="cell" style="left:1805px;top:623.0px;height:32px;line-height:32px;font-size:16px;color:#222;transform:scaleX(0.9000);transform-origin:0 0;">202</div>
<div class="a" style="left:276px;top:666px;width:146px;height:55px;background:#f2f2f2"></div>
<div class="a" style="left:425px;top:666px;width:1453px;height:55px;background:#f2f2f2"></div>
<div class="cb" style="top:686px"></div>
<div class="cell" style="left:318px;top:678.0px;height:32px;line-height:32px;font-size:16px;color:#2f74b8;transform:scaleX(0.9550);transform-origin:0 0;">100007</div>
<svg style="left:374px;top:681px" width="26" height="24" viewBox="374 681 26 24"><rect x="383.9" y="684.2" width="5.4" height="5.5" rx="0.6" fill="#333"/><path d="M386.6 689.7 V695.1 M380.3 695.3 V692.4 H393 V695.3" fill="none" stroke="#333" stroke-width="1.3"/><rect x="377.5" y="695.1" width="5.2" height="5.1" rx="0.6" fill="#333"/><rect x="384.1" y="695.1" width="5.2" height="5.1" rx="0.6" fill="#333"/><rect x="390.7" y="695.1" width="5.3" height="5.1" rx="0.6" fill="#333"/></svg>
<div class="cell" style="left:430.5px;top:669.8px;height:26px;line-height:26px;font-size:15px;color:#2f74b8">Арамян Саркис Самвелович</div>
<div class="a" style="left:431px;top:698px"><span class="badge">Ошибка</span></div>
<div class="cell" style="left:695px;top:678.0px;height:32px;line-height:32px;font-size:16px;color:#222;transform:scaleX(0.9780);transform-origin:0 0;">Индивид...</div>
<div class="cell" style="left:949px;top:678.0px;height:32px;line-height:32px;font-size:16px;color:#222;transform:scaleX(0.9490);transform-origin:0 0;">01.07.2020</div>
<div class="cell" style="left:1041px;top:678.0px;height:32px;line-height:32px;font-size:16px;color:#222;transform:scaleX(0.9490);transform-origin:0 0;">07.07.2020</div>
<div class="cell" style="left:1133px;top:678.0px;height:32px;line-height:32px;font-size:16px;color:#222;transform:scaleX(1.0124);transform-origin:0 0;">Повышенной комфортности</div>
<div class="mark" style="left:1360px;top:686px;background:#ffff00"></div>
<div class="cell" style="left:1370px;top:678.0px;height:32px;line-height:32px;font-size:16px;color:#222;transform:scaleX(0.8100);transform-origin:0 0;">RACK</div>
<div class="cell" style="left:1460px;top:678.0px;height:32px;line-height:32px;font-size:16px;color:#222;">Главный Корпус 02-ой Этаж</div>
<div class="cell" style="left:1701px;top:678.0px;height:32px;line-height:32px;font-size:16px;color:#222;transform:scaleX(0.8200);transform-origin:0 0;">VS</div>
<div class="cell" style="left:1805px;top:678.0px;height:32px;line-height:32px;font-size:16px;color:#222;transform:scaleX(0.9000);transform-origin:0 0;">204</div>
<div class="a" style="left:276px;top:721px;width:146px;height:33px;background:#ffffff"></div>
<div class="a" style="left:425px;top:721px;width:1453px;height:33px;background:#ffffff"></div>
<div class="cb" style="top:730px"></div>
<div class="cell" style="left:318px;top:722.0px;height:32px;line-height:32px;font-size:16px;color:#2f74b8;transform:scaleX(0.9550);transform-origin:0 0;">100008</div>
<div class="cell" style="left:430px;top:722.0px;height:32px;line-height:32px;font-size:15px;color:#2f74b8">Горобец Иван Ильич</div>
<div class="a" style="left:580.6px;top:729.0px"><span class="badge">Ошибка</span></div>
<div class="cell" style="left:695px;top:722.0px;height:32px;line-height:32px;font-size:16px;color:#222;transform:scaleX(0.9780);transform-origin:0 0;">Индивид...</div>
<div class="cell" style="left:949px;top:722.0px;height:32px;line-height:32px;font-size:16px;color:#222;transform:scaleX(0.9490);transform-origin:0 0;">30.06.2020</div>
<div class="cell" style="left:1041px;top:722.0px;height:32px;line-height:32px;font-size:16px;color:#222;transform:scaleX(0.9490);transform-origin:0 0;">06.07.2020</div>
<div class="cell" style="left:1133px;top:722.0px;height:32px;line-height:32px;font-size:16px;color:#222;transform:scaleX(0.9865);transform-origin:0 0;">Стандартные номера</div>
<div class="mark" style="left:1360px;top:730px;background:#ffff00"></div>
<div class="cell" style="left:1370px;top:722.0px;height:32px;line-height:32px;font-size:16px;color:#222;transform:scaleX(0.8100);transform-origin:0 0;">RACK</div>
<div class="cell" style="left:1460px;top:722.0px;height:32px;line-height:32px;font-size:16px;color:#222;">Главный Корпус 05-ый Этаж</div>
<div class="cell" style="left:1701px;top:722.0px;height:32px;line-height:32px;font-size:16px;color:#222;transform:scaleX(0.8200);transform-origin:0 0;">SQ</div>
<div class="cell" style="left:1805px;top:722.0px;height:32px;line-height:32px;font-size:16px;color:#222;transform:scaleX(0.9000);transform-origin:0 0;">516</div>
<div class="a" style="left:276px;top:754px;width:146px;height:55px;background:#f2f2f2"></div>
<div class="a" style="left:425px;top:754px;width:1453px;height:55px;background:#f2f2f2"></div>
<div class="cb" style="top:774px"></div>
<div class="cell" style="left:318px;top:766.0px;height:32px;line-height:32px;font-size:16px;color:#2f74b8;transform:scaleX(0.9550);transform-origin:0 0;">100009</div>
<div class="cell" style="left:430.5px;top:757.8px;height:26px;line-height:26px;font-size:15px;color:#2f74b8">Живоцков Андрей Георгиевич</div>
<div class="a" style="left:431px;top:786px"><span class="badge">Ошибка</span></div>
<div class="cell" style="left:695px;top:766.0px;height:32px;line-height:32px;font-size:16px;color:#222;transform:scaleX(0.9780);transform-origin:0 0;">Индивид...</div>
<div class="cell" style="left:949px;top:766.0px;height:32px;line-height:32px;font-size:16px;color:#222;transform:scaleX(0.9490);transform-origin:0 0;">01.07.2020</div>
<div class="cell" style="left:1041px;top:766.0px;height:32px;line-height:32px;font-size:16px;color:#222;transform:scaleX(0.9490);transform-origin:0 0;">08.07.2020</div>
<div class="cell" style="left:1133px;top:766.0px;height:32px;line-height:32px;font-size:16px;color:#222;transform:scaleX(1.0124);transform-origin:0 0;">Повышенной комфортности</div>
<div class="mark" style="left:1360px;top:774px;background:#ffff00"></div>
<div class="cell" style="left:1370px;top:766.0px;height:32px;line-height:32px;font-size:16px;color:#222;transform:scaleX(0.8100);transform-origin:0 0;">RACK</div>
<div class="cell" style="left:1460px;top:766.0px;height:32px;line-height:32px;font-size:16px;color:#222;">Главный Корпус 02-ой Этаж</div>
<div class="cell" style="left:1701px;top:766.0px;height:32px;line-height:32px;font-size:16px;color:#222;transform:scaleX(0.8200);transform-origin:0 0;">SS</div>
<div class="cell" style="left:1805px;top:766.0px;height:32px;line-height:32px;font-size:16px;color:#222;transform:scaleX(0.9000);transform-origin:0 0;">218</div>
<div class="a" style="left:276px;top:809px;width:146px;height:55px;background:#ffffff"></div>
<div class="a" style="left:425px;top:809px;width:1453px;height:55px;background:#ffffff"></div>
<div class="cb" style="top:828px"></div>
<div class="cell" style="left:318px;top:821.0px;height:32px;line-height:32px;font-size:16px;color:#2f74b8;transform:scaleX(0.9550);transform-origin:0 0;">100009</div>
<div class="cell" style="left:430.5px;top:812.8px;height:26px;line-height:26px;font-size:15px;color:#2f74b8">Живоцкова Лидия Ивановна</div>
<div class="a" style="left:431px;top:841px"><span class="badge">Ошибка</span></div>
<div class="cell" style="left:695px;top:821.0px;height:32px;line-height:32px;font-size:16px;color:#222;transform:scaleX(0.9780);transform-origin:0 0;">Индивид...</div>
<div class="cell" style="left:949px;top:821.0px;height:32px;line-height:32px;font-size:16px;color:#222;transform:scaleX(0.9490);transform-origin:0 0;">01.07.2020</div>
<div class="cell" style="left:1041px;top:821.0px;height:32px;line-height:32px;font-size:16px;color:#222;transform:scaleX(0.9490);transform-origin:0 0;">08.07.2020</div>
<div class="cell" style="left:1133px;top:821.0px;height:32px;line-height:32px;font-size:16px;color:#222;transform:scaleX(1.0124);transform-origin:0 0;">Повышенной комфортности</div>
<div class="mark" style="left:1360px;top:828px;background:#ffff00"></div>
<div class="cell" style="left:1370px;top:821.0px;height:32px;line-height:32px;font-size:16px;color:#222;transform:scaleX(0.8100);transform-origin:0 0;">RACK</div>
<div class="cell" style="left:1460px;top:821.0px;height:32px;line-height:32px;font-size:16px;color:#222;">Главный Корпус 02-ой Этаж</div>
<div class="cell" style="left:1701px;top:821.0px;height:32px;line-height:32px;font-size:16px;color:#222;transform:scaleX(0.8200);transform-origin:0 0;">SS</div>
<div class="cell" style="left:1805px;top:821.0px;height:32px;line-height:32px;font-size:16px;color:#222;transform:scaleX(0.9000);transform-origin:0 0;">218</div>
<div class="a" style="left:276px;top:864px;width:146px;height:33px;background:#f2f2f2"></div>
<div class="a" style="left:425px;top:864px;width:1453px;height:33px;background:#f2f2f2"></div>
<div class="cb" style="top:872px"></div>
<div class="cell" style="left:318px;top:865.0px;height:32px;line-height:32px;font-size:16px;color:#2f74b8;transform:scaleX(0.9550);transform-origin:0 0;">100010</div>
<svg style="left:375px;top:867px" width="26" height="24" viewBox="375 867 26 24"><circle cx="381.6" cy="872.4" r="2.7" fill="#b3c1db"/><circle cx="393.5" cy="872.4" r="2.7" fill="#b3c1db"/><path d="M377.1 876.7 Q377.1 875.2 378.6 875.2 H383 Q384 878.5 385 879.5 Q382 880.0 381.5 880.8 H378.6 Q377.1 880.8 377.1 879.3 Z" fill="#b3c1db"/><path d="M398 876.7 Q398 875.2 396.5 875.2 H392.1 Q391.1 878.5 390.1 879.5 Q393.1 880.0 393.6 880.8 H396.5 Q398 880.8 398 879.3 Z" fill="#b3c1db"/><circle cx="387.6" cy="876.6" r="3.7" fill="#b3c1db"/><path d="M380 882.5 Q380 880.1 382.5 880.1 Q385 881.7 387.5 881.7 Q390 881.7 392.5 880.1 Q395 880.1 395 882.5 V886.9 Q395 888.9 393 888.9 H382 Q380 888.9 380 886.9 Z" fill="#b3c1db"/></svg>
<div class="cell" style="left:430px;top:865.0px;height:32px;line-height:32px;font-size:15px;color:#2f74b8">Иванов Иван Сергеевич</div>
<div class="a" style="left:604.6px;top:872.0px"><span class="badge">Ошибка</span></div>
<div class="cell" style="left:695px;top:865.0px;height:32px;line-height:32px;font-size:16px;color:#222;transform:scaleX(0.9780);transform-origin:0 0;">ООО "ТР...</div>
<div class="cell" style="left:786px;top:865.0px;height:32px;line-height:32px;font-size:15px;color:#2f74b8;text-decoration:underline;text-underline-offset:2px">Регби</div>
<div class="cell" style="left:949px;top:865.0px;height:32px;line-height:32px;font-size:16px;color:#222;transform:scaleX(0.9490);transform-origin:0 0;">30.06.2020</div>
<div class="cell" style="left:1041px;top:865.0px;height:32px;line-height:32px;font-size:16px;color:#222;transform:scaleX(0.9490);transform-origin:0 0;">05.07.2020</div>
<div class="cell" style="left:1133px;top:865.0px;height:32px;line-height:32px;font-size:16px;color:#222;transform:scaleX(0.9865);transform-origin:0 0;">Стандартные номера</div>
<div class="mark" style="left:1360px;top:872px;background:#ffff00"></div>
<div class="cell" style="left:1370px;top:865.0px;height:32px;line-height:32px;font-size:16px;color:#222;transform:scaleX(0.8100);transform-origin:0 0;">RACK</div>
<div class="cell" style="left:1460px;top:865.0px;height:32px;line-height:32px;font-size:16px;color:#222;">Главный Корпус 02-ой Этаж</div>
<div class="cell" style="left:1701px;top:865.0px;height:32px;line-height:32px;font-size:16px;color:#222;transform:scaleX(0.8200);transform-origin:0 0;">SQ</div>
<div class="cell" style="left:1805px;top:865.0px;height:32px;line-height:32px;font-size:16px;color:#222;transform:scaleX(0.9000);transform-origin:0 0;">216</div>
<div class="hl" style="left:276px;top:899px;width:146px;background:#bdbdbd"></div>
<svg style="left:429px;top:905px" width="5" height="8" viewBox="0 0 5 8"><path d="M5 0 L0 4 L5 8 Z" fill="#777"/></svg>
<div class="a" style="left:439px;top:907px;width:744px;height:4px;background:#d3d3d3"></div>
<svg style="left:1868px;top:905px" width="5" height="8" viewBox="0 0 5 8"><path d="M0 0 L5 4 L0 8 Z" fill="#777"/></svg>
<div class="a" style="left:1878px;top:899px;width:20px;height:20px;border-left:1px solid #c6c6c6;border-top:1px solid #c6c6c6"></div>
<svg style="left:1884px;top:375px" width="7" height="4" viewBox="0 0 7 4"><path d="M0 4 L3.5 0 L7 4 Z" fill="#777"/></svg>
<div class="a" style="left:1886px;top:384px;width:4px;height:19px;background:#d3d3d3"></div>
<svg style="left:1884px;top:889px" width="7" height="4" viewBox="0 0 7 4"><path d="M0 0 L3.5 4 L7 0 Z" fill="#777"/></svg>
<div class="hl" style="left:276px;top:919px;width:1622px;background:#bdbdbd"></div>
<div class="t" style="left:298px;top:938px;font-size:15.6px;line-height:16px;color:#333">Броней: 2163</div>
<div class="t" style="left:1690px;top:938px;font-size:16px;line-height:16px;color:#333">К-во гостей: 2888+77+63</div>
<div class="a" style="left:268px;top:110px;width:213px;height:51px;border:5px solid #ed1c24"></div>
<div class="a" style="left:4px;top:398px;width:242px;height:42px;border:5px solid #ed1c24"></div>
<svg style="left:0;top:0" width="1920" height="1034"><path d="M270.5 157 L244 401" stroke="#ed1c24" stroke-width="4.6"/></svg>
<div id="footer"></div>
<div class="a" style="left:15px;top:997px;width:164px;height:33px;background:#fff;border-radius:4px"></div>
<svg style="left:36px;top:1005px" width="16" height="16" viewBox="0 0 16 16"><circle cx="8" cy="8" r="8" fill="#555"/><text x="8" y="12.5" font-size="12" font-family="Liberation Sans" font-weight="700" text-anchor="middle" fill="#fff">?</text></svg>
<div class="t" style="left:57px;top:1005px;font-size:16.7px;line-height:18px;color:#555">Справка (F1)</div>
<div class="a" style="left:193px;top:1000px;width:250px;height:29px;background:#ff6347;border-radius:3px"></div>
<div class="t" style="left:205px;top:1005px;font-size:15.5px;line-height:17px;color:#000">База на сервере Librahospitality</div>
<div class="t" style="left:1687px;top:1006px;font-size:15.5px;line-height:17px;color:#e6e6e6">Tesla Hotel</div>
<div class="t" style="left:1770px;top:1006px;font-size:15.2px;line-height:17px;font-weight:700;color:#fff">14 ноября 2021 г.</div>
</body></html>
